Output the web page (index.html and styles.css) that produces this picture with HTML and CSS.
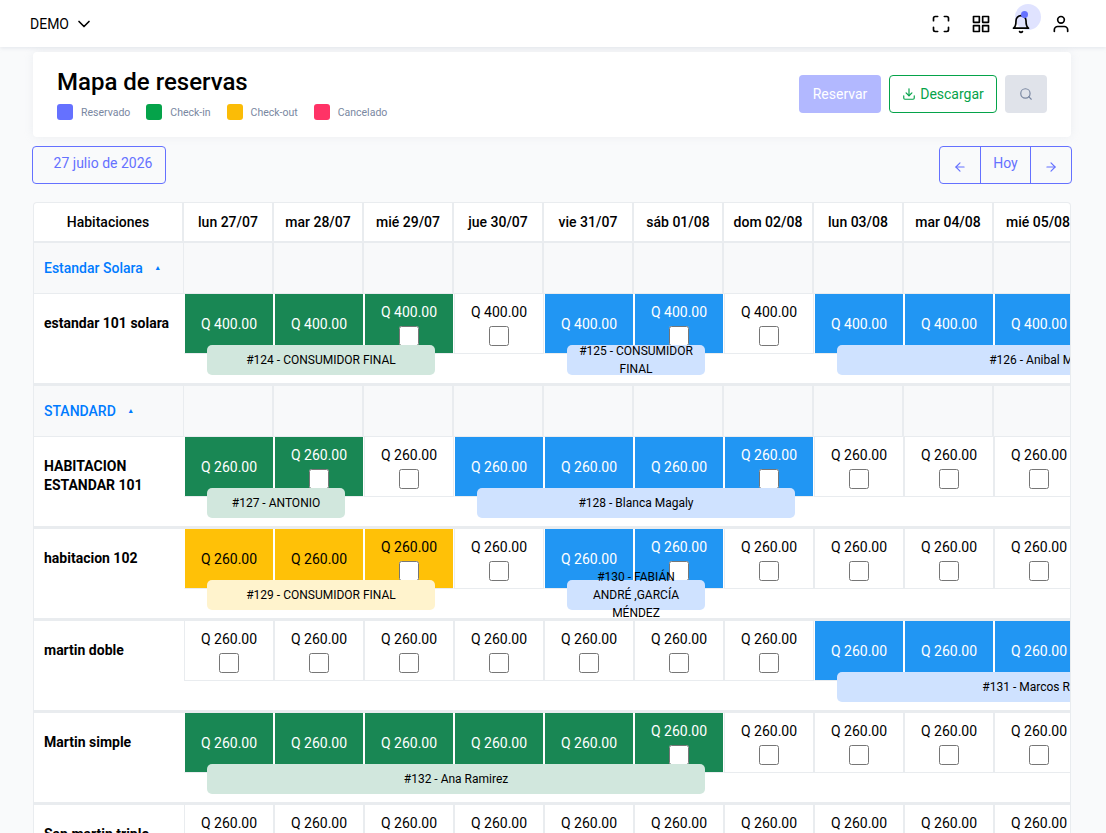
FILE: index.html
```html
<!DOCTYPE html>
<html lang="es">
  <head>
    <meta charset="UTF-8" />
    <title>Mapa de reservas</title>
    <link rel="stylesheet" href="styles.css">
  </head>
  <body>
    <nav class="topbar">
      <div class="hotel">DEMO
        <svg class="chev" viewBox="0 0 24 24"><polyline points="6 9 12 15 18 9"></polyline></svg>
      </div>
      <div class="topIcons">
        <svg class="ico" viewBox="0 0 24 24"><path d="M8 3H5a2 2 0 0 0-2 2v3m18 0V5a2 2 0 0 0-2-2h-3m0 18h3a2 2 0 0 0 2-2v-3M3 16v3a2 2 0 0 0 2 2h3"></path></svg>
        <svg class="ico" viewBox="0 0 24 24"><rect x="3" y="3" width="7" height="7"></rect><rect x="14" y="3" width="7" height="7"></rect><rect x="14" y="14" width="7" height="7"></rect><rect x="3" y="14" width="7" height="7"></rect></svg>
        <div class="bell">
          <span class="halo"></span>
          <svg class="ico" viewBox="0 0 24 24"><path d="M18 8A6 6 0 0 0 6 8c0 7-3 9-3 9h18s-3-2-3-9"></path><path d="M13.73 21a2 2 0 0 1-3.46 0"></path></svg>
          <span class="dot"></span>
        </div>
        <svg class="ico" viewBox="0 0 24 24"><path d="M20 21v-2a4 4 0 0 0-4-4H8a4 4 0 0 0-4 4v2"></path><circle cx="12" cy="7" r="4"></circle></svg>
      </div>
    </nav>

    <main class="page">
      <section class="headCard">
        <div>
          <h1>Mapa de reservas</h1>
          <ul class="legend">
            <li><i class="sw swBlue"></i>Reservado</li>
            <li><i class="sw swGreen"></i>Check-in</li>
            <li><i class="sw swYellow"></i>Check-out</li>
            <li><i class="sw swRed"></i>Cancelado</li>
          </ul>
        </div>
        <div class="actions">
          <button class="btn btnBook">Reservar</button>
          <button class="btn btnDown">
            <svg viewBox="0 0 24 24"><path d="M21 15v4a2 2 0 0 1-2 2H5a2 2 0 0 1-2-2v-4"></path><polyline points="7 10 12 15 17 10"></polyline><line x1="12" y1="15" x2="12" y2="3"></line></svg>
            Descargar
          </button>
          <button class="btn btnFind">
            <svg viewBox="0 0 24 24"><circle cx="11" cy="11" r="8"></circle><line x1="21" y1="21" x2="16.65" y2="16.65"></line></svg>
          </button>
        </div>
      </section>

      <div class="toolbar">
        <button class="dateBtn">27 julio de 2026</button>
        <div class="navGroup">
          <button><svg viewBox="0 0 24 24"><line x1="19" y1="12" x2="5" y2="12"></line><polyline points="12 19 5 12 12 5"></polyline></svg></button>
          <button class="today">Hoy</button>
          <button><svg viewBox="0 0 24 24"><line x1="5" y1="12" x2="19" y2="12"></line><polyline points="12 5 19 12 12 19"></polyline></svg></button>
        </div>
      </div>

      <section class="board">
        <div class="row headRow">
          <div class="hc">Habitaciones</div>
          <div class="hc">lun 27/07</div><div class="hc">mar 28/07</div><div class="hc">mié 29/07</div><div class="hc">jue 30/07</div><div class="hc">vie 31/07</div>
          <div class="hc">sáb 01/08</div><div class="hc">dom 02/08</div><div class="hc">lun 03/08</div><div class="hc">mar 04/08</div><div class="hc">mié 05/08</div>
        </div>

        <div class="row groupRow">
          <div class="gc gName">Estandar Solara <span class="tri">▲</span></div>
          <div class="gc"></div><div class="gc"></div><div class="gc"></div><div class="gc"></div><div class="gc"></div>
          <div class="gc"></div><div class="gc"></div><div class="gc"></div><div class="gc"></div><div class="gc"></div>
        </div>

        <div class="row room">
          <div class="rName">estandar 101 solara</div>
          <div class="dc green"><span>Q 400.00</span></div>
          <div class="dc green"><span>Q 400.00</span></div>
          <div class="dc green"><span>Q 400.00</span><input type="checkbox"></div>
          <div class="dc"><span>Q 400.00</span><input type="checkbox"></div>
          <div class="dc blue"><span>Q 400.00</span></div>
          <div class="dc blue"><span>Q 400.00</span><input type="checkbox"></div>
          <div class="dc"><span>Q 400.00</span><input type="checkbox"></div>
          <div class="dc blue"><span>Q 400.00</span></div>
          <div class="dc blue"><span>Q 400.00</span></div>
          <div class="dc blue"><span>Q 400.00</span></div>
          <div class="bar barGreen" style="left: 173px; width: 228px">#124 - CONSUMIDOR FINAL</div>
          <div class="bar barBlue" style="left: 533px; width: 138px">#125 - CONSUMIDOR FINAL</div>
          <div class="bar barBlue" style="left: 803px; width: 408px">#126 - Anibal Meda</div>
        </div>

        <div class="row groupRow">
          <div class="gc gName">STANDARD <span class="tri">▲</span></div>
          <div class="gc"></div><div class="gc"></div><div class="gc"></div><div class="gc"></div><div class="gc"></div>
          <div class="gc"></div><div class="gc"></div><div class="gc"></div><div class="gc"></div><div class="gc"></div>
        </div>

        <div class="row room">
          <div class="rName">HABITACION ESTANDAR 101</div>
          <div class="dc green"><span>Q 260.00</span></div>
          <div class="dc green"><span>Q 260.00</span><input type="checkbox"></div>
          <div class="dc"><span>Q 260.00</span><input type="checkbox"></div>
          <div class="dc blue"><span>Q 260.00</span></div>
          <div class="dc blue"><span>Q 260.00</span></div>
          <div class="dc blue"><span>Q 260.00</span></div>
          <div class="dc blue"><span>Q 260.00</span><input type="checkbox"></div>
          <div class="dc"><span>Q 260.00</span><input type="checkbox"></div>
          <div class="dc"><span>Q 260.00</span><input type="checkbox"></div>
          <div class="dc"><span>Q 260.00</span><input type="checkbox"></div>
          <div class="bar barGreen" style="left: 173px; width: 138px">#127 - ANTONIO</div>
          <div class="bar barBlue" style="left: 443px; width: 318px">#128 - Blanca Magaly</div>
        </div>

        <div class="row room">
          <div class="rName">habitacion 102</div>
          <div class="dc yellow"><span>Q 260.00</span></div>
          <div class="dc yellow"><span>Q 260.00</span></div>
          <div class="dc yellow"><span>Q 260.00</span><input type="checkbox"></div>
          <div class="dc"><span>Q 260.00</span><input type="checkbox"></div>
          <div class="dc blue"><span>Q 260.00</span></div>
          <div class="dc blue"><span>Q 260.00</span><input type="checkbox"></div>
          <div class="dc"><span>Q 260.00</span><input type="checkbox"></div>
          <div class="dc"><span>Q 260.00</span><input type="checkbox"></div>
          <div class="dc"><span>Q 260.00</span><input type="checkbox"></div>
          <div class="dc"><span>Q 260.00</span><input type="checkbox"></div>
          <div class="bar barYellow" style="left: 173px; width: 228px">#129 - CONSUMIDOR FINAL</div>
          <div class="bar barBlue" style="left: 533px; width: 138px">#130 - FABIÁN ANDRÉ ,GARCÍA MÉNDEZ</div>
        </div>

        <div class="row room">
          <div class="rName">martin doble</div>
          <div class="dc"><span>Q 260.00</span><input type="checkbox"></div>
          <div class="dc"><span>Q 260.00</span><input type="checkbox"></div>
          <div class="dc"><span>Q 260.00</span><input type="checkbox"></div>
          <div class="dc"><span>Q 260.00</span><input type="checkbox"></div>
          <div class="dc"><span>Q 260.00</span><input type="checkbox"></div>
          <div class="dc"><span>Q 260.00</span><input type="checkbox"></div>
          <div class="dc"><span>Q 260.00</span><input type="checkbox"></div>
          <div class="dc blue"><span>Q 260.00</span></div>
          <div class="dc blue"><span>Q 260.00</span></div>
          <div class="dc blue"><span>Q 260.00</span></div>
          <div class="bar barBlue" style="left: 803px; width: 408px">#131 - Marcos Ribeiro</div>
        </div>

        <div class="row room">
          <div class="rName">Martin simple</div>
          <div class="dc green"><span>Q 260.00</span></div>
          <div class="dc green"><span>Q 260.00</span></div>
          <div class="dc green"><span>Q 260.00</span></div>
          <div class="dc green"><span>Q 260.00</span></div>
          <div class="dc green"><span>Q 260.00</span></div>
          <div class="dc green"><span>Q 260.00</span><input type="checkbox"></div>
          <div class="dc"><span>Q 260.00</span><input type="checkbox"></div>
          <div class="dc"><span>Q 260.00</span><input type="checkbox"></div>
          <div class="dc"><span>Q 260.00</span><input type="checkbox"></div>
          <div class="dc"><span>Q 260.00</span><input type="checkbox"></div>
          <div class="bar barGreen" style="left: 173px; width: 498px">#132 - Ana Ramirez</div>
        </div>

        <div class="row room">
          <div class="rName">San martin triple</div>
          <div class="dc"><span>Q 260.00</span><input type="checkbox"></div>
          <div class="dc"><span>Q 260.00</span><input type="checkbox"></div>
          <div class="dc"><span>Q 260.00</span><input type="checkbox"></div>
          <div class="dc"><span>Q 260.00</span><input type="checkbox"></div>
          <div class="dc"><span>Q 260.00</span><input type="checkbox"></div>
          <div class="dc"><span>Q 260.00</span><input type="checkbox"></div>
          <div class="dc"><span>Q 260.00</span><input type="checkbox"></div>
          <div class="dc"><span>Q 260.00</span><input type="checkbox"></div>
          <div class="dc"><span>Q 260.00</span><input type="checkbox"></div>
          <div class="dc"><span>Q 260.00</span><input type="checkbox"></div>
        </div>
      </section>
    </main>
  </body>
</html>
```

FILE: styles.css
```css
* {
  box-sizing: border-box;
}
html,
body {
  height: 100%;
  overflow: hidden;
}
body {
  margin: 0;
  background: #f9fafb;
  color: #000;
  font-family: Roboto, "Liberation Sans", sans-serif;
  font-size: 14px;
}
button {
  font-family: inherit;
}

/* barra superior */
.topbar {
  height: 47px;
  background: #fff;
  box-shadow: 0 1px 4px rgba(183, 192, 206, 0.35);
  display: flex;
  justify-content: space-between;
  align-items: center;
  padding: 0 35px 0 30px;
  position: relative;
}
.hotel {
  display: flex;
  align-items: center;
  gap: 5px;
  font-size: 14px;
}
.chev {
  width: 20px;
  height: 20px;
  fill: none;
  stroke: #000;
  stroke-width: 2;
  stroke-linecap: round;
  stroke-linejoin: round;
}
.topIcons {
  display: flex;
  align-items: center;
  gap: 20px;
}
.ico {
  display: block;
  width: 20px;
  height: 20px;
  fill: none;
  stroke: #000;
  stroke-width: 2;
  stroke-linecap: round;
  stroke-linejoin: round;
}
.bell {
  position: relative;
}
.halo {
  position: absolute;
  left: -8px;
  top: -10px;
  width: 26px;
  height: 26px;
  margin-left: 12px;
  border-radius: 50%;
  background: #e0e3ff;
}
.bell .ico {
  position: relative;
}
.dot {
  position: absolute;
  left: 10px;
  top: -3px;
  width: 7px;
  height: 7px;
  border-radius: 50%;
  background: #6571ff;
}

.page {
  padding: 5px 34px 0 32px;
}

/* cabecera */
.headCard {
  height: 85px;
  margin-left: 1px;
  margin-right: 1px;
  padding: 16px 24px;
  background: #fff;
  border-radius: 4px;
  box-shadow: 0 0 10px rgba(183, 192, 206, 0.2);
  display: flex;
  justify-content: space-between;
}
h1 {
  margin: 0;
  font-size: 24px;
  line-height: 29px;
  font-weight: 500;
}
.legend {
  list-style: none;
  margin: 7px 0 0;
  padding: 0;
  display: flex;
  gap: 16px;
  font-size: 10.5px;
  color: #7987a1;
}
.legend li {
  display: flex;
  align-items: center;
  gap: 8px;
  height: 16px;
}
.sw {
  width: 16px;
  height: 16px;
  border-radius: 3px;
}
.swBlue {
  background: #6571ff;
}
.swGreen {
  background: #05a34a;
}
.swYellow {
  background: #fbbc06;
}
.swRed {
  background: #ff3366;
}
.actions {
  display: flex;
  gap: 8px;
  padding-top: 7px;
  height: 45px;
}
.btn {
  height: 38px;
  border-radius: 4px;
  font-size: 14px;
  border: 1px solid transparent;
  display: flex;
  align-items: center;
  justify-content: center;
  padding: 0;
}
.btn svg {
  fill: none;
  stroke: currentColor;
  stroke-width: 2;
  stroke-linecap: round;
  stroke-linejoin: round;
}
.btnBook {
  width: 82px;
  background: #b2b8ff;
  color: #fff;
}
.btnDown {
  width: 108px;
  gap: 4px;
  background: #fff;
  border-color: #05a34a;
  color: #05a34a;
}
.btnDown svg {
  width: 14px;
  height: 14px;
}
.btnFind {
  width: 42px;
  background: #e0e3ea;
  color: #7987a1;
}
.btnFind svg {
  width: 14px;
  height: 14px;
}

/* fecha y navegacion */
.toolbar {
  display: flex;
  justify-content: space-between;
  margin-top: 9px;
}
.dateBtn {
  width: 134px;
  height: 38px;
  padding: 0 0 4px 8px;
  background: transparent;
  border: 1px solid #6571ff;
  border-radius: 4px;
  color: #6571ff;
  font-size: 14px;
}
.navGroup {
  display: flex;
  height: 38px;
  border: 1px solid #6571ff;
  border-radius: 4px;
}
.navGroup button {
  width: 40px;
  background: transparent;
  border: 0;
  padding: 0;
  color: #6571ff;
  font-size: 14px;
  display: flex;
  align-items: center;
  justify-content: center;
}
.navGroup svg {
  width: 14px;
  height: 14px;
  margin-top: 4px;
  fill: none;
  stroke: currentColor;
  stroke-width: 2;
  stroke-linecap: round;
  stroke-linejoin: round;
}
.navGroup .today {
  width: 51px;
  padding-bottom: 4px;
  border-left: 1px solid #6571ff;
  border-right: 1px solid #6571ff;
}

/* mapa */
.board {
  margin: 18px 0 0 1px;
  width: 1038px;
  background: #fff;
  border: 1px solid #e9ecef;
  border-bottom: 0;
  border-radius: 4px 4px 0 0;
  overflow: hidden;
}
.row {
  display: grid;
  grid-template-columns: 150px repeat(10, 90px);
  width: 1050px;
  position: relative;
}
.headRow {
  height: 40px;
  border-bottom: 2px solid #e9ecef;
}
.hc {
  border-right: 2px solid #e9ecef;
  display: flex;
  align-items: center;
  justify-content: center;
  font-weight: 500;
  height: 38px;
}
.groupRow {
  height: 51px;
  border-bottom: 1px solid #e9ecef;
}
.gc {
  background: #f8f9fa;
  border-right: 2px solid #e9ecef;
}
.gName {
  display: flex;
  align-items: center;
  padding-left: 10px;
  color: #007bff;
  font-weight: 500;
  border-right-width: 1px;
  white-space: pre;
}
.tri {
  font-size: 7px;
  margin-left: 8px;
}
.room {
  height: 92px;
  border-bottom: 3px solid #e9ecef;
  align-items: start;
}
.rName {
  padding: 20px 10px 0;
  font-weight: 700;
  line-height: 19px;
  color: #000;
}
.dc {
  height: 60px;
  border: 1px solid #e9ecef;
  border-top: 0;
  border-left-color: #e9ecef;
  background: #fff;
  display: flex;
  flex-direction: column;
  align-items: center;
  justify-content: center;
  gap: 4px;
}
.dc span {
  line-height: 20px;
}
.dc input {
  width: 20px;
  height: 20px;
  margin: 0;
}
.green,
.blue,
.yellow {
  color: #fff;
  border-color: #fff;
  border-top: 0;
  border-bottom-color: #e9ecef;
}
.green {
  background: #198754;
}
.blue {
  background: #2196f3;
}
.yellow {
  background: #ffc107;
  color: #000;
}
.bar {
  position: absolute;
  top: 51px;
  height: 30px;
  padding: 0 10px;
  border-radius: 5px;
  display: flex;
  align-items: center;
  justify-content: center;
  text-align: center;
  font-size: 12px;
  line-height: 18px;
  color: #000;
}
.barGreen {
  background: #d1e7dd;
}
.barBlue {
  background: #cfe2ff;
}
.barYellow {
  background: #fff3cd;
}
```
